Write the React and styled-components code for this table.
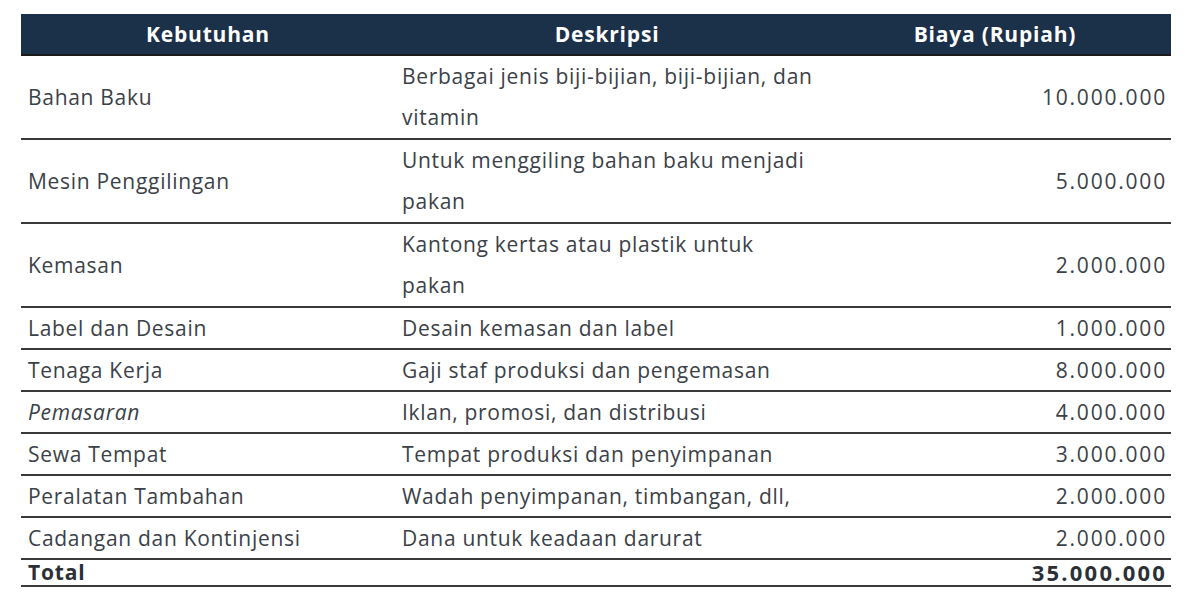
import React from 'react';
import styled, { createGlobalStyle } from 'styled-components';

const GlobalStyle = createGlobalStyle`
    body {
        margin: 0;
        background: #ffffff;
        font-family: "Open Sans", "Noto Sans", sans-serif;
    }
`;

const StyledPage = styled.div`
    padding: 14px 29px 0 21px;
`;

const StyledTable = styled.table`
    width: 1150px;
    border-collapse: collapse;
    table-layout: fixed;
    color: #3b4148;
    font-size: 21px;
    letter-spacing: 0.7px;
`;

const StyledHeadCell = styled.th`
    background: #1b3049;
    color: #ffffff;
    font-weight: 700;
    font-size: 21px;
    letter-spacing: 0.8px;
    height: 40px;
    line-height: 40px;
    padding: 0;
    text-align: center;
    border-bottom: 2px solid #1a1a1a;
    width: ${(props) => props.$width};
`;

const StyledRow = styled.tr`
    border-bottom: 2px solid #3a3a3a;
`;

const StyledCell = styled.td`
    padding: 0 ${(props) => (props.$right ? '4px' : '0')} 0 7px;
    height: ${(props) => (props.$tall ? '82px' : '40px')};
    line-height: ${(props) => (props.$tall ? '41px' : '40px')};
    text-align: ${(props) => (props.$right ? 'right' : 'left')};
    font-style: ${(props) => (props.$italic ? 'italic' : 'normal')};
    letter-spacing: ${(props) => (props.$right ? '1.8px' : '0.7px')};
    vertical-align: middle;
    white-space: ${(props) => (props.$wrap ? 'normal' : 'nowrap')};
`;

const StyledTotalCell = styled.td`
    padding: 0 ${(props) => (props.$right ? '4px' : '6px')} 0 7px;
    height: 25px;
    line-height: 25px;
    font-weight: 700;
    font-size: ${(props) => (props.$right ? '22px' : '21px')};
    letter-spacing: ${(props) => (props.$right ? '2.2px' : '0.8px')};
    color: #2b3037;
    text-align: ${(props) => (props.$right ? 'right' : 'left')};
`;

const StyledDesc = styled.div`
    max-width: 416px;
`;

const items = [
    { need: 'Bahan Baku', desc: 'Berbagai jenis biji-bijian, biji-bijian, dan vitamin', cost: '10.000.000', tall: true },
    { need: 'Mesin Penggilingan', desc: 'Untuk menggiling bahan baku menjadi pakan', cost: '5.000.000', tall: true },
    { need: 'Kemasan', desc: 'Kantong kertas atau plastik untuk pakan', cost: '2.000.000', tall: true },
    { need: 'Label dan Desain', desc: 'Desain kemasan dan label', cost: '1.000.000' },
    { need: 'Tenaga Kerja', desc: 'Gaji staf produksi dan pengemasan', cost: '8.000.000' },
    { need: 'Pemasaran', desc: 'Iklan, promosi, dan distribusi', cost: '4.000.000', italic: true },
    { need: 'Sewa Tempat', desc: 'Tempat produksi dan penyimpanan', cost: '3.000.000' },
    { need: 'Peralatan Tambahan', desc: 'Wadah penyimpanan, timbangan, dll,', cost: '2.000.000' },
    { need: 'Cadangan dan Kontinjensi', desc: 'Dana untuk keadaan darurat', cost: '2.000.000' },
];

export default function App() {
    return (
        <StyledPage>
            <GlobalStyle />
            <StyledTable>
                <thead>
                    <tr>
                        <StyledHeadCell $width="374px">Kebutuhan</StyledHeadCell>
                        <StyledHeadCell $width="424px">Deskripsi</StyledHeadCell>
                        <StyledHeadCell>Biaya (Rupiah)</StyledHeadCell>
                    </tr>
                </thead>
                <tbody>
                    {items.map((item) => (
                        <StyledRow key={item.need}>
                            <StyledCell $tall={item.tall} $italic={item.italic}>{item.need}</StyledCell>
                            <StyledCell $tall={item.tall} $wrap>
                                <StyledDesc>{item.desc}</StyledDesc>
                            </StyledCell>
                            <StyledCell $tall={item.tall} $right>{item.cost}</StyledCell>
                        </StyledRow>
                    ))}
                    <StyledRow>
                        <StyledTotalCell>Total</StyledTotalCell>
                        <StyledTotalCell />
                        <StyledTotalCell $right>35.000.000</StyledTotalCell>
                    </StyledRow>
                </tbody>
            </StyledTable>
        </StyledPage>
    );
}
